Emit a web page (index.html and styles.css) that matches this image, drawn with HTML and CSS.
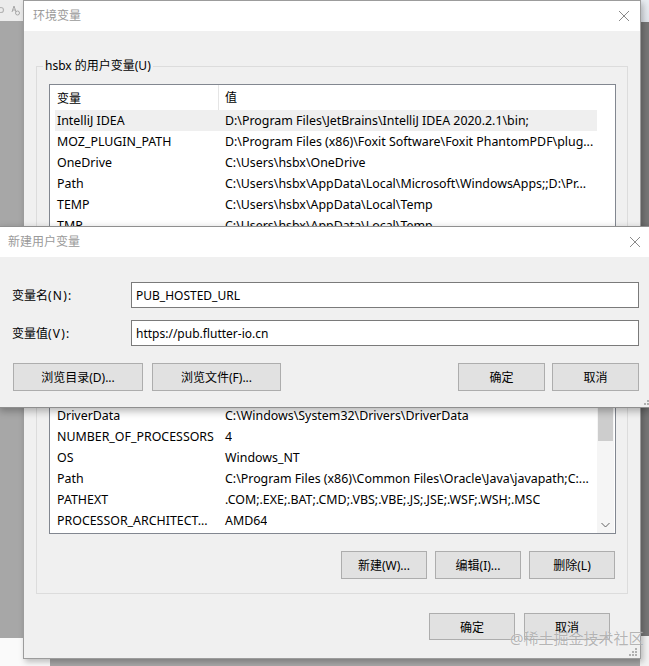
FILE: index.html
```html
<!DOCTYPE html>
<html lang="zh-CN">
<head>
<meta charset="utf-8">
<title>环境变量</title>
<link rel="stylesheet" href="styles.css">
</head>
<body>
<div class="desktop">
  <div class="bg-topleft">
    <svg class="tl-icons" width="23" height="20" viewBox="0 0 23 20"><circle cx="1" cy="10" r="2.5" fill="none" stroke="#b5b5b5" stroke-width="1.2"/><path d="M14 6 L12 12 M14 6 L16 12 M12.5 10 H15.5" stroke="#a8a8a8" stroke-width="1" fill="none"/><circle cx="17.5" cy="13" r="2" fill="none" stroke="#a8a8a8" stroke-width="1"/></svg>
  </div>
  <div class="bg-right-top"></div>
  <div class="bg-right-bottom"></div>
  <div class="bg-bottom-left"></div>
  <div class="bg-bottom-right"></div>

  <section class="win main-win">
    <header class="titlebar">
      <span class="title">环境变量</span>
      <svg class="close" width="12" height="12" viewBox="0 0 12 12"><path d="M1 1 L11 11 M11 1 L1 11" stroke="#8a8a8a" stroke-width="1" fill="none"/></svg>
    </header>
    <div class="win-body">
      <fieldset class="group g-user">
        <legend>hsbx 的用户变量(U)</legend>
        <div class="list list-user">
          <div class="list-rows">
            <div class="lhead"><span class="c1">变量</span><span class="c2 hd2">值</span></div>
            <div class="row sel"><span class="c1">IntelliJ IDEA</span><span class="c2">D:\Program Files\JetBrains\IntelliJ IDEA 2020.2.1\bin;</span></div>
            <div class="row"><span class="c1">MOZ_PLUGIN_PATH</span><span class="c2">D:\Program Files (x86)\Foxit Software\Foxit PhantomPDF\plug...</span></div>
            <div class="row"><span class="c1">OneDrive</span><span class="c2">C:\Users\hsbx\OneDrive</span></div>
            <div class="row"><span class="c1">Path</span><span class="c2">C:\Users\hsbx\AppData\Local\Microsoft\WindowsApps;;D:\Pr...</span></div>
            <div class="row"><span class="c1">TEMP</span><span class="c2">C:\Users\hsbx\AppData\Local\Temp</span></div>
            <div class="row"><span class="c1">TMP</span><span class="c2">C:\Users\hsbx\AppData\Local\Temp</span></div>
          </div>
        </div>
        <div class="btnrow">
          <span class="btn b86"></span>
          <span class="btn b86"></span>
          <span class="btn b86"></span>
        </div>
      </fieldset>

      <fieldset class="group g-sys">
        <legend class="empty-legend"></legend>
        <div class="list list-sys">
          <div class="list-rows">
            <div class="lhead"></div>
            <div class="row"></div>
            <div class="row"></div>
            <div class="row"></div>
            <div class="row"><span class="c1">DriverData</span><span class="c2">C:\Windows\System32\Drivers\DriverData</span></div>
            <div class="row"><span class="c1">NUMBER_OF_PROCESSORS</span><span class="c2">4</span></div>
            <div class="row"><span class="c1">OS</span><span class="c2">Windows_NT</span></div>
            <div class="row"><span class="c1">Path</span><span class="c2">C:\Program Files (x86)\Common Files\Oracle\Java\javapath;C:...</span></div>
            <div class="row"><span class="c1">PATHEXT</span><span class="c2">.COM;.EXE;.BAT;.CMD;.VBS;.VBE;.JS;.JSE;.WSF;.WSH;.MSC</span></div>
            <div class="row"><span class="c1">PROCESSOR_ARCHITECT...</span><span class="c2">AMD64</span></div>
          </div>
          <div class="vscroll">
            <div class="sb-arrow"><svg width="9" height="6" viewBox="0 0 9 6"><path d="M0.5 5 L4.5 1 L8.5 5" stroke="#606060" fill="none"/></svg></div>
            <div class="sb-track"><div class="sb-thumb"></div></div>
            <div class="sb-arrow"><svg width="9" height="6" viewBox="0 0 9 6"><path d="M0.5 1 L4.5 5 L8.5 1" stroke="#606060" fill="none"/></svg></div>
          </div>
        </div>
        <div class="btnrow">
          <button class="btn b86">新建(W)...</button>
          <button class="btn b86">编辑(I)...</button>
          <button class="btn b86">删除(L)</button>
        </div>
      </fieldset>

      <div class="footer">
        <button class="btn f86">确定</button>
        <button class="btn f86">取消</button>
      </div>
    </div>
    <svg class="grip grip-main" width="8" height="8" viewBox="0 0 8 8"><g fill="#b0b0b0"><rect x="6" y="0" width="2" height="2"/><rect x="3" y="3" width="2" height="2"/><rect x="6" y="3" width="2" height="2"/><rect x="0" y="6" width="2" height="2"/><rect x="3" y="6" width="2" height="2"/><rect x="6" y="6" width="2" height="2"/></g></svg>
  </section>

  <section class="win dlg">
    <header class="titlebar dlg-title">
      <span class="title">新建用户变量</span>
      <svg class="close" width="12" height="12" viewBox="0 0 12 12"><path d="M1 1 L11 11 M11 1 L1 11" stroke="#8a8a8a" stroke-width="1" fill="none"/></svg>
    </header>
    <div class="dlg-body">
      <div class="field">
        <label class="flabel">变量名<span class="paren">(N):</span></label>
        <div class="input">PUB_HOSTED_URL</div>
      </div>
      <div class="field">
        <label class="flabel">变量值<span class="paren">(V):</span></label>
        <div class="input">https://pub.flutter-io.cn</div>
      </div>
      <div class="dlg-btns">
        <button class="btn d-wide">浏览目录(D)...</button>
        <button class="btn d-wide2">浏览文件(F)...</button>
        <span class="spacer"></span>
        <button class="btn d87">确定</button>
        <button class="btn d87">取消</button>
      </div>
    </div>
    <svg class="grip grip-dlg" width="8" height="8" viewBox="0 0 8 8"><g fill="#b0b0b0"><rect x="6" y="0" width="2" height="2"/><rect x="3" y="3" width="2" height="2"/><rect x="6" y="3" width="2" height="2"/><rect x="0" y="6" width="2" height="2"/><rect x="3" y="6" width="2" height="2"/><rect x="6" y="6" width="2" height="2"/></g></svg>
  </section>

  <div class="watermark">@稀土掘金技术社区</div>
</div>
</body>
</html>
```

FILE: styles.css
```css
* { box-sizing: border-box; }
html, body { margin: 0; padding: 0; }
body {
  width: 649px;
  height: 666px;
  overflow: hidden;
  font-family: "Noto Sans", "Noto Sans CJK SC", sans-serif;
  font-size: 12px;
  color: #000;
}
.desktop {
  position: relative;
  width: 649px;
  height: 666px;
  background: #a7a7a7;
  overflow: hidden;
}
.bg-topleft {
  position: absolute; left: 0; top: 0; width: 23px; height: 21px;
  background: #ececec;
}
.tl-icons { display: block; }
.bg-right-top {
  position: absolute; right: 0; top: 0; width: 9px; height: 22px;
  background: linear-gradient(#e9edf2, #dfe4ea);
}
.bg-right-bottom {
  position: absolute; right: 0; top: 22px; width: 9px; height: 614px;
  background: #767676;
}
.bg-bottom-left {
  position: absolute; left: 0; top: 638px; width: 50px; height: 28px;
  background: #fafafa;
}
.bg-bottom-right {
  position: absolute; right: 0; top: 636px; width: 9px; height: 30px;
  background: #f2f2f2;
}

/* windows */
.win {
  position: absolute;
  background: #f0f0f0;
  border: 1px solid #9c9c9c;
  display: flex;
  flex-direction: column;
}
.main-win {
  left: 23px; top: 0; width: 618px; height: 659px;
  box-shadow: 2px 3px 6px rgba(0,0,0,0.25);
}
.titlebar {
  height: 30px;
  flex: none;
  background: #fff;
  display: flex;
  align-items: center;
  justify-content: space-between;
  padding: 0 9px 0 9px;
}
.title { color: #9a9a9a; font-size: 12px; line-height: 16px; }
.close { display: block; margin-right: 1px; }

.win-body { padding: 27px 12px 0 12px; display: flex; flex-direction: column; }

.group {
  margin: 0;
  padding: 10px 11px 6px 12px;
  border: 1px solid #dcdcdc;
  min-width: 0;
}
.group legend {
  padding: 0 2px;
  margin-left: -6px;
  line-height: 16px;
  height: 16px;
}
.group legend.empty-legend { width: 0; padding: 0; }
.g-sys { margin-top: 2px; padding-bottom: 14px; }

.list {
  background: #fff;
  border: 1px solid #828790;
  display: flex;
  overflow: hidden;
}
.list-user { height: 160px; }
.list-sys { height: 218px; }
.list-rows { width: 563px; flex: none; overflow: hidden; }
.lhead {
  height: 25px;
  display: flex;
  align-items: center;
  margin-left: 5px;
  width: 542px;
}
.row {
  height: 21px;
  display: flex;
  align-items: center;
  margin-left: 5px;
  width: 542px;
  white-space: nowrap;
  font-size: 12.4px;
}
.row.sel { background: #efefef; }
.c1 { width: 163px; flex: none; padding-left: 2px; overflow: hidden; white-space: nowrap; }
.c2 { padding-left: 7px; overflow: hidden; white-space: nowrap; }
.hd2 { border-left: 1px solid #e5e5e5; height: 25px; line-height: 25px; padding-left: 6px; }

.vscroll {
  width: 17px;
  flex: none;
  background: #f5f5f5;
  display: flex;
  flex-direction: column;
}
.list-sys .list-rows { width: 547px; }
.sb-arrow { height: 17px; display: flex; align-items: center; justify-content: center; flex: none; }
.sb-track { flex: 1; padding: 0 1px; }
.sb-thumb { margin-top: 73px; height: 34px; background: #cdcdcd; }

.btnrow {
  display: flex;
  justify-content: flex-end;
  gap: 8px;
  margin-top: 9px;
  padding-right: 1px;
}
.g-sys .btnrow { margin-top: 17px; }
.btn {
  font: inherit;
  color: #000;
  background: #e1e1e1;
  border: 1px solid #adadad;
  height: 28px;
  padding: 0;
  display: flex;
  align-items: center;
  justify-content: center;
}
.b86 { width: 86px; }
.footer {
  display: flex;
  justify-content: flex-end;
  gap: 9px;
  margin-top: 19px;
  padding-right: 18px;
}
.f86 { width: 86px; height: 27px; }

/* dialog */
.dlg {
  left: -1px; top: 226px; width: 652px; height: 182px;
  border-color: #8f8f8f;
  box-shadow: 0 3px 8px rgba(0,0,0,0.3);
}
.dlg-title { padding: 0 9px 0 8px; }
.dlg-title .close { margin-right: 0; }
.dlg-body { padding: 25px 11px 0 12px; display: flex; flex-direction: column; }
.field { display: flex; align-items: center; height: 26px; margin-bottom: 12px; }
.flabel { width: 119px; flex: none; }
.paren { letter-spacing: 1.2px; }
.input {
  flex: 1;
  height: 26px;
  background: #fff;
  border: 1px solid #7a7a7a;
  padding: 0 4px;
  display: flex;
  align-items: center;
  font-size: 12px;
}
.dlg-btns { display: flex; gap: 9px; margin-top: 5px; padding-left: 1px; padding-right: 0; }
.d-wide { width: 130px; }
.d-wide2 { width: 129px; }
.spacer { flex: 1; }
.d87 { width: 87px; }
.dlg-btns .d87 + .d87 { margin-left: -2px; }

.grip { position: absolute; }
.grip-main { right: 3px; bottom: 2px; }
.grip-dlg { right: -2px; bottom: 2px; }

.watermark {
  position: absolute;
  left: 510px;
  top: 628px;
  font-size: 15px;
  line-height: 20px;
  color: rgba(150,150,150,0.7);
  text-shadow: 0 0 1px rgba(255,255,255,0.8);
  white-space: nowrap;
}
```
